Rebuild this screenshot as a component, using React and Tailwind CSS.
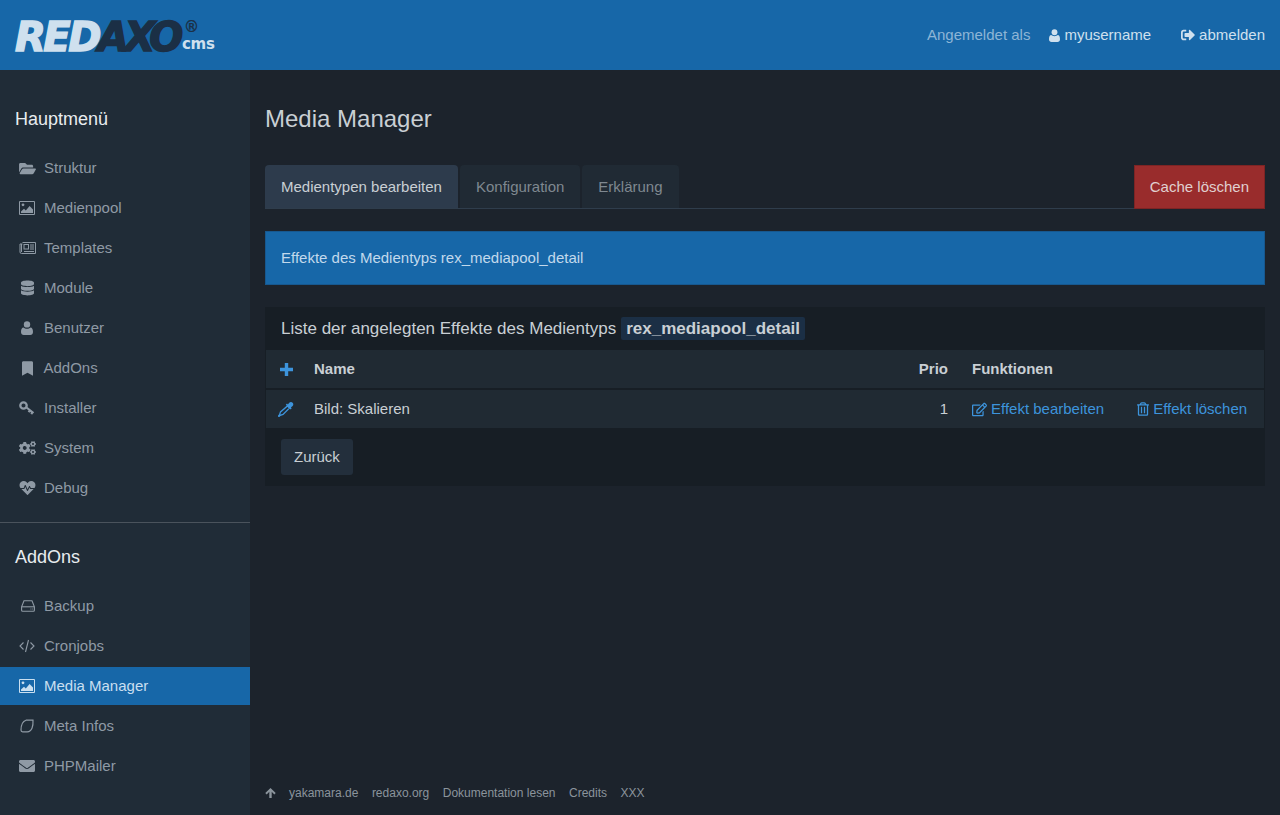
import {
  FaFolderOpen,
  FaDatabase,
  FaBookmark,
  FaCogs,
  FaHeartbeat,
  FaEnvelope,
  FaRegEdit,
  FaRegTrashAlt,
  FaSignOutAlt,
} from "react-icons/fa";

function PictureIcon({ className }) {
  return (
    <svg viewBox="0 0 16 14" className={className} fill="currentColor">
      <path fillRule="evenodd" d="M0 1a1 1 0 0 1 1-1h14a1 1 0 0 1 1 1v12a1 1 0 0 1-1 1H1a1 1 0 0 1-1-1V1zm1 0v12h14V1H1z" />
      <circle cx="4" cy="3.800" r="1.400" />
      <path d="M2 12v-1.600l3-2.600 1.800 1.600L10.600 5 14 8.600V12H2z" />
    </svg>
  );
}

function NewsIcon({ className }) {
  return (
    <svg viewBox="0 0 17 14" className={className} fill="none" stroke="currentColor" strokeWidth="1">
      <path d="M3.500 1.500h13v11h-14a1.500 1.500 0 0 1-1.500-1.500V3h2.500" />
      <path d="M2.500 3v8" />
      <rect x="5" y="3.500" width="4.500" height="4.500" />
      <path d="M11 4h4M11 6h4M11 8h4M5 10.500h10" />
    </svg>
  );
}

function UserIcon({ className }) {
  return (
    <svg viewBox="0 0 12 14" className={className} fill="currentColor">
      <circle cx="6" cy="3.400" r="3.200" />
      <path d="M0 11c0-3 1-4.600 2.500-4.600C3.400 7.200 4.600 7.700 6 7.700s2.600-.5 3.500-1.300C11 6.400 12 8 12 11c0 1.900-1.200 3-2.700 3H2.700C1.200 14 0 12.900 0 11z" />
    </svg>
  );
}

function KeyIcon({ className }) {
  return (
    <svg viewBox="0 0 16 14" className={className} fill="none" stroke="currentColor">
      <circle cx="4.500" cy="4.500" r="3.200" strokeWidth="2.300" />
      <path d="M7.500 6.500l7 5.500M11 9.300l-1.400 1.900M13.500 11.200l-1.300 1.800" strokeWidth="2.200" />
    </svg>
  );
}

function HddIcon({ className }) {
  return (
    <svg viewBox="0 0 14 12" className={className} fill="none" stroke="currentColor" strokeWidth="1.100">
      <path d="M3 .8h8l2.400 6v3.400a1 1 0 0 1-1 1H1.600a1 1 0 0 1-1-1V6.800L3 .8z" />
      <path d="M.8 6.800h12.400" />
      <path d="M9.500 9h.9M11.300 9h.9" strokeWidth="1.200" />
    </svg>
  );
}

function CodeIcon({ className }) {
  return (
    <svg viewBox="0 0 16 14" className={className} fill="none" stroke="currentColor" strokeWidth="1.100">
      <path d="M4.500 3.500L1 7l3.500 3.500M11.500 3.500L15 7l-3.500 3.500M9.500 1L6.500 13" />
    </svg>
  );
}

function MetaIcon({ className }) {
  return (
    <svg viewBox="0 0 16 16" className={className} fill="none" stroke="currentColor" strokeWidth="1.200">
      <path d="M7 2.200h7c.3 5.400-.8 11.600-5.800 11.600H3.600C2.400 13.800 2 13 2 12 2 7.500 3.200 3.500 7 2.200z" />
    </svg>
  );
}

function DropperIcon({ className }) {
  return (
    <svg viewBox="0 0 16 16" className={className}>
      <path d="M9.500 5l2 2-6.500 6.400-2.800.9-1.200 1.200-.6-.6 1.200-1.200.9-2.800L9.500 5z" fill="none" stroke="currentColor" strokeWidth="1.300" />
      <path d="M7.800 3.700l1.200-1.100.9.800 1.300-1.700c1.100-1 2.500-.9 3.400 0s1 2.300 0 3.400l-1.700 1.300.8.900-1.100 1.200-4.800-4.800z" fill="currentColor" />
    </svg>
  );
}

function PlusIcon({ className }) {
  return (
    <svg viewBox="0 0 13 13" className={className} fill="currentColor">
      <path d="M4.800 0h3.400v4.800H13v3.400H8.200V13H4.800V8.200H0V4.800h4.800V0z" />
    </svg>
  );
}

function ArrowUpIcon({ className }) {
  return (
    <svg viewBox="0 0 12 12" className={className} fill="currentColor">
      <path d="M6 .5l5.700 5.500-1.500 1.500-2.900-2.800V11.500H4.700V4.700L1.800 7.500.3 6 6 .5z" />
    </svg>
  );
}

const mainMenu = [
  { label: "Struktur", Icon: FaFolderOpen, size: "w-[17px] h-[15px]" },
  { label: "Medienpool", Icon: PictureIcon, size: "w-4 h-[14px]" },
  { label: "Templates", Icon: NewsIcon, size: "w-[17px] h-[14px]" },
  { label: "Module", Icon: FaDatabase, size: "w-[13px] h-[16px]", pad: "pl-[2px]" },
  { label: "Benutzer", Icon: UserIcon, size: "w-3 h-[14px]", pad: "pl-[2px]" },
  { label: "AddOns", Icon: FaBookmark, size: "w-[11px] h-[15px]", pad: "pl-[3px]", gap: "w-[24.5px]" },
  { label: "Installer", Icon: KeyIcon, size: "w-4 h-[14px]" },
  { label: "System", Icon: FaCogs, size: "w-[17px] h-[16px]" },
  { label: "Debug", Icon: FaHeartbeat, size: "w-[17px] h-[16px]" },
];

const addonMenu = [
  { label: "Backup", Icon: HddIcon, size: "w-[14px] h-[12px]", pad: "pl-[2px]" },
  { label: "Cronjobs", Icon: CodeIcon, size: "w-4 h-[14px]" },
  { label: "Media Manager", Icon: PictureIcon, size: "w-4 h-[14px]", active: true },
  { label: "Meta Infos", Icon: MetaIcon, size: "w-4 h-4" },
  { label: "PHPMailer", Icon: FaEnvelope, size: "w-4 h-4" },
];

function NavItem({ label, Icon, size, pad = "", gap = "w-[25px]", active }) {
  return (
    <a
      className={
        "flex h-[38px] items-center pl-[19px] " +
        (active ? "bg-[#1767a8] text-[#c9dff0]" : "text-[#8f9aa5]")
      }
    >
      <span className={"flex shrink-0 items-center " + gap + " " + pad}>
        <Icon className={size} />
      </span>
      <span>{label}</span>
    </a>
  );
}

function Logo() {
  return (
    <div className="flex items-start pl-[15px] font-['DejaVu_Sans',sans-serif] font-bold italic leading-none">
      <span className="w-[83px] whitespace-nowrap pt-[17px] text-[40px] tracking-[-2.5px] text-[#cfe0ee] [-webkit-text-stroke:1.5px_#cfe0ee]">
        RED
      </span>
      <span className="w-[84px] whitespace-nowrap pt-[17px] text-[40px] tracking-[-4.5px] text-[#1b2f45] [-webkit-text-stroke:1.5px_#1b2f45]">
        AXO
      </span>
      <div className="flex flex-col">
        <span className="pl-[2px] pt-[18px] text-[15px] font-normal not-italic leading-[18px] text-[#1b2f45] [-webkit-text-stroke:0.4px_#1b2f45]">
          ®
        </span>
        <span className="text-[15px] not-italic leading-[16px] tracking-[-0.3px] text-[#cfe0ee]">cms</span>
      </div>
    </div>
  );
}

export default function App() {
  return (
    <div className="flex min-h-[815px] flex-col overflow-hidden bg-[#1c232c] font-['Liberation_Sans',Arial,sans-serif] text-[15px] text-[#c9cfd4]">
      <header className="flex h-[70px] items-start justify-between bg-[#1767a8]">
        <Logo />
        <div className="flex items-center gap-[30px] pr-[15px] pt-[25px] leading-[20px] text-[#cfe0ee]">
          <div className="flex items-center">
            <span className="text-[#8db5d6]">Angemeldet als</span>
            <UserIcon className="ml-[19px] mr-1 h-[13px] w-[11px]" />
            <span>myusername</span>
          </div>
          <div className="flex items-center">
            <FaSignOutAlt className="mr-1 h-[14px] w-[14px]" />
            <span>abmelden</span>
          </div>
        </div>
      </header>

      <div className="flex h-[745px]">
        <aside className="flex w-[250px] shrink-0 flex-col bg-[#202c37]">
          <h2 className="pl-[15px] pt-[38px] text-[18px] leading-[22px] text-[#e8ecef]">Hauptmenü</h2>
          <nav className="flex flex-col gap-[2px] pt-[19px]">
            {mainMenu.map((item) => (
              <NavItem key={item.label} {...item} />
            ))}
          </nav>
          <div className="mt-[15px] border-t border-[#4a535c]" />
          <h2 className="pl-[15px] pt-[23px] text-[18px] leading-[22px] text-[#e8ecef]">AddOns</h2>
          <nav className="flex flex-col gap-[2px] pt-[19px]">
            {addonMenu.map((item) => (
              <NavItem key={item.label} {...item} />
            ))}
          </nav>
        </aside>

        <main className="flex min-w-0 flex-1 flex-col px-[15px]">
          <h1 className="pt-[33px] text-[24px] leading-[32px] text-[#c9cfd4]">Media Manager</h1>

          <div className="mt-[30px] flex h-[44px] items-stretch justify-between border-b border-[#2f3d4c]">
            <div className="flex gap-[2px]">
              <a className="flex items-center rounded-t-[4px] bg-[#2d3b4c] px-4 pt-[2px] text-[#c9cfd4]">
                Medientypen bearbeiten
              </a>
              <a className="flex items-center rounded-t-[4px] bg-[#202a34] px-4 pt-[2px] text-[#7f8890]">
                Konfiguration
              </a>
              <a className="flex items-center rounded-t-[4px] bg-[#202a34] px-4 pt-[2px] text-[#7f8890]">
                Erklärung
              </a>
            </div>
            <a className="mb-[-1px] flex items-center border border-[#7d2424] bg-[#992c2c] px-[15px] text-[#e0d0d0]">
              Cache löschen
            </a>
          </div>

          <div className="mt-[22px] flex h-[54px] items-center border border-[#17588f] bg-[#1767a8] px-[15px] text-[#c2d9ec]">
            Effekte des Medientyps rex_mediapool_detail
          </div>

          <section className="mt-[22px] bg-[#171e25]">
            <div className="flex h-[43px] items-center pl-4 text-[17px] text-[#c9cfd4]">
              <span>Liste der angelegten Effekte des Medientyps</span>
              <code className="ml-[5px] rounded-[2px] bg-[#1b2f45] px-[5px] font-['Liberation_Sans',Arial,sans-serif] text-[17px] font-bold leading-[23px]">
                rex_mediapool_detail
              </code>
            </div>

            <div className="flex flex-col gap-[2px] px-px">
              <div className="flex h-[38px] items-center bg-[#202a33] font-bold">
                <span className="flex w-[48px] justify-center pr-[8px] text-[#3d94dc]">
                  <PlusIcon className="h-[13px] w-[13px]" />
                </span>
                <span className="flex-1">Name</span>
                <span className="w-[60px] pr-[12px] text-right">Prio</span>
                <span className="w-[304px] pl-[12px]">Funktionen</span>
              </div>
              <div className="flex h-[38px] items-center bg-[#202a33]">
                <span className="flex w-[48px] justify-center pr-[8px] text-[#3d94dc]">
                  <DropperIcon className="h-4 w-4" />
                </span>
                <span className="flex-1">Bild: Skalieren</span>
                <span className="w-[60px] pr-[12px] text-right">1</span>
                <span className="flex w-[304px] items-center pl-[12px] text-[#3d94dc]">
                  <FaRegEdit className="mr-1 h-[15px] w-[15px]" />
                  <span>Effekt bearbeiten</span>
                  <FaRegTrashAlt className="ml-[33px] mr-1 h-[14px] w-[12px]" />
                  <span>Effekt löschen</span>
                </span>
              </div>
            </div>

            <div className="px-4 py-[11px]">
              <a className="inline-flex h-[36px] items-center rounded-[3px] bg-[#232f3c] px-[13px] text-[#c9cfd4]">
                Zurück
              </a>
            </div>
          </section>

          <footer className="mt-auto flex h-[44px] items-center text-[12px] text-[#8b949c]">
            <ArrowUpIcon className="mr-[13px] h-3 w-[11px]" />
            <span className="mr-[13.5px]">yakamara.de</span>
            <span className="mr-[13.5px]">redaxo.org</span>
            <span className="mr-[13.5px]">Dokumentation lesen</span>
            <span className="mr-[13.5px]">Credits</span>
            <span>XXX</span>
          </footer>
        </main>
      </div>
    </div>
  );
}
